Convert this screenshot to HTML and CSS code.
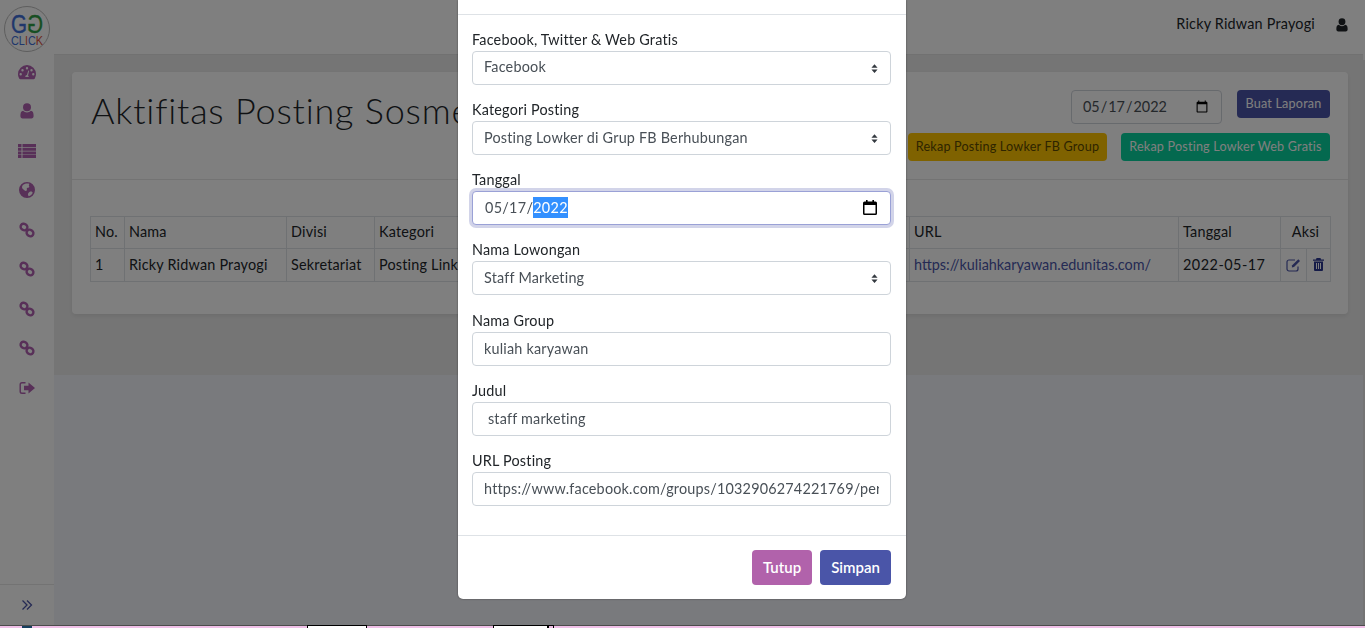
FILE: index.html
```html
<!DOCTYPE html>
<html lang="en">
<head>
    <meta charset="UTF-8">
    <meta name="viewport" content="width=device-width, initial-scale=1.0">
    <title>Aktifitas Posting Sosmed</title>
    <link rel="stylesheet" href="styles.css">
</head>
<body>
    <div class="app">
        <aside class="sidebar">
            <a class="logo" href="#">
                <svg width="48" height="48" viewBox="0 0 48 48">
                    <circle cx="24" cy="24" r="22.5" fill="#fff" stroke="#bbb"/>
                    <text x="8" y="28" class="logo-g" fill="#3f6fd8" stroke="#3f6fd8" stroke-width="0.4" textLength="16" lengthAdjust="spacingAndGlyphs">G</text>
                    <text x="-40" y="28" class="logo-g" fill="#2f9e44" stroke="#2f9e44" stroke-width="0.4" transform="scale(-1 1)" textLength="16" lengthAdjust="spacingAndGlyphs">G</text>
                    <text x="8" y="39.500" class="logo-click" textLength="32" lengthAdjust="spacingAndGlyphs"><tspan fill="#3f6fd8">C</tspan><tspan fill="#3f6fd8">L</tspan><tspan fill="#e0603a">I</tspan><tspan fill="#3f6fd8">C</tspan><tspan fill="#d8503a">K</tspan></text>
                </svg>
            </a>
            <nav class="side-nav">
                <a href="#"><svg width="18" height="16" viewBox="0 0 18 16"><path fill-rule="evenodd" d="M9 1a9 9 0 0 0-9 9c0 1.700.5 3.300 1.300 4.700.3.300.600.500 1 .500h13.400c.4 0 .7-.2 1-.5A9 9 0 0 0 18 10a9 9 0 0 0-9-9zM9 3a1.200 1.200 0 1 1 0 2.400A1.200 1.200 0 0 1 9 3zM4.500 5a1.200 1.200 0 1 1 0 2.400 1.200 1.200 0 0 1 0-2.400zm9 0a1.200 1.200 0 1 1 0 2.400 1.200 1.200 0 0 1 0-2.400zM2.700 9a1.200 1.200 0 1 1 0 2.400 1.200 1.200 0 0 1 0-2.400zm12.600 0a1.200 1.200 0 1 1 0 2.400 1.200 1.200 0 0 1 0-2.400zM10.300 6.500l.9.300-1.200 4.600c.5.400.8 1 .7 1.600H7.300c-.1-1 .6-1.900 1.600-2z"/></svg></a>
                <a href="#"><svg width="14" height="16" viewBox="0 0 14 16"><circle cx="7" cy="4.200" r="4"/><path d="M3.200 7.800C1 8 .4 10 .4 13c0 1.500.8 2.500 2.200 2.500h8.800c1.400 0 2.200-1 2.200-2.500 0-3-.6-5-2.800-5.200C9.700 8.800 8.500 9.400 7 9.400s-2.700-.6-3.800-1.600z"/></svg></a>
                <a href="#"><svg width="18" height="14" viewBox="0 0 18 14"><path d="M0 0h3.500v3H0zM4.500 0H18v3H4.500zM0 3.700h3.500v3H0zM4.500 3.700H18v3H4.500zM0 7.400h3.500v3H0zM4.500 7.400H18v3H4.500zM0 11h3.500v3H0zM4.500 11H18v3H4.500z"/></svg></a>
                <a href="#"><svg width="16" height="16" viewBox="0 0 16 16"><path fill-rule="evenodd" d="M8 0a8 8 0 1 1 0 16A8 8 0 0 1 8 0zM3.500 3.500C2.600 5 3 6.800 4.500 7.500c1 .5 1.300 1.500 2.300 1.500.8 0 1.400-1 1-2-.3-.8.500-1.300 1.300-1.300 1 0 1.500-.8 1-1.700-.5-.8-.3-1.500.4-2C8.500 1 5.500 1.500 3.500 3.500zM12 9.500c-1.200 0-2 .7-2.700 1.700-.7 1-.2 2 .4 3 1.700-.4 3.300-1.700 4-3.400-.4-.8-.9-1.300-1.700-1.300z"/></svg></a>
                <a href="#" class="chain"><svg width="16" height="16" viewBox="0 0 16 16"><g fill="none" stroke-width="2.400"><rect x="1.500" y="2" width="7" height="6" rx="3" transform="rotate(35 5 5)"/><rect x="7.500" y="8" width="7" height="6" rx="3" transform="rotate(35 11 11)"/></g></svg></a>
                <a href="#" class="chain"><svg width="16" height="16" viewBox="0 0 16 16"><g fill="none" stroke-width="2.400"><rect x="1.500" y="2" width="7" height="6" rx="3" transform="rotate(35 5 5)"/><rect x="7.500" y="8" width="7" height="6" rx="3" transform="rotate(35 11 11)"/></g></svg></a>
                <a href="#" class="chain"><svg width="16" height="16" viewBox="0 0 16 16"><g fill="none" stroke-width="2.400"><rect x="1.500" y="2" width="7" height="6" rx="3" transform="rotate(35 5 5)"/><rect x="7.500" y="8" width="7" height="6" rx="3" transform="rotate(35 11 11)"/></g></svg></a>
                <a href="#" class="chain"><svg width="16" height="16" viewBox="0 0 16 16"><g fill="none" stroke-width="2.400"><rect x="1.500" y="2" width="7" height="6" rx="3" transform="rotate(35 5 5)"/><rect x="7.500" y="8" width="7" height="6" rx="3" transform="rotate(35 11 11)"/></g></svg></a>
                <a href="#"><svg width="16" height="14" viewBox="0 0 16 14"><path d="M6.500 13H3a2.500 2.500 0 0 1-2.500-2.500v-7A2.500 2.500 0 0 1 3 1h3.500v1.400H3A1.100 1.100 0 0 0 1.900 3.500v7A1.100 1.100 0 0 0 3 11.600h3.500z"/><path d="M9.500 1.500 16 7l-6.500 5.500V9.300H5V4.700h4.500z"/></svg></a>
            </nav>
            <div class="side-footer">
                <svg width="12" height="12" viewBox="0 0 12 12" fill="none" stroke="#4a55a8" stroke-width="1.300"><path d="M1.500 1.500 6 6l-4.500 4.500M6 1.500 10.500 6 6 10.500"/></svg>
            </div>
        </aside>

        <div class="main">
            <header class="topbar">
                <span class="user-name">Ricky Ridwan Prayogi</span>
                <svg width="12" height="14" viewBox="0 0 14 16" fill="#212529"><circle cx="7" cy="4.200" r="4"/><path d="M3.200 7.800C1 8 .4 10 .4 13c0 1.500.8 2.500 2.200 2.500h8.800c1.400 0 2.200-1 2.200-2.500 0-3-.6-5-2.800-5.200C9.700 8.800 8.500 9.400 7 9.400s-2.700-.6-3.800-1.600z"/></svg>
            </header>
            <section class="content">
                <div class="card">
                    <div class="card-header">
                        <h1>Aktifitas Posting Sosmed</h1>
                        <div class="card-tools">
                            <div class="tools-row">
                                <input class="report-date" type="date" value="2022-05-17">
                                <button class="btn btn-sm btn-primary">Buat Laporan</button>
                            </div>
                            <div class="tools-row tools-row-second">
                                <button class="btn btn-sm btn-warning">Rekap Posting Lowker FB Group</button>
                                <button class="btn btn-sm btn-success">Rekap Posting Lowker Web Gratis</button>
                            </div>
                        </div>
                    </div>
                    <div class="card-body">
                        <table class="data-table">
                            <colgroup>
                                <col class="col-no">
                                <col class="col-name">
                                <col class="col-div">
                                <col class="col-cat">
                                <col class="col-url">
                                <col class="col-date">
                                <col class="col-edit">
                                <col class="col-del">
                            </colgroup>
                            <thead>
                                <tr>
                                    <th>No.</th>
                                    <th>Nama</th>
                                    <th>Divisi</th>
                                    <th>Kategori</th>
                                    <th>URL</th>
                                    <th>Tanggal</th>
                                    <th colspan="2" class="center">Aksi</th>
                                </tr>
                            </thead>
                            <tbody>
                                <tr>
                                    <td>1</td>
                                    <td>Ricky Ridwan Prayogi</td>
                                    <td>Sekretariat</td>
                                    <td>Posting Link</td>
                                    <td><a class="row-link" href="#">https://kuliahkaryawan.edunitas.com/</a></td>
                                    <td class="row-date">2022-05-17</td>
                                    <td class="center">
                                        <svg width="15" height="14" viewBox="0 0 15 14"><path fill="none" stroke="#4a55a8" stroke-width="1.200" d="M12 8.500V11a2 2 0 0 1-2 2H3a2 2 0 0 1-2-2V4a2 2 0 0 1 2-2h6"/><path fill="#4a55a8" d="M12.300 1.200 14 2.900 8 9 5.800 9.400 6.200 7.200z"/></svg>
                                    </td>
                                    <td class="center">
                                        <svg width="11" height="13" viewBox="0 0 11 13" fill="#2b3690"><path fill-rule="evenodd" d="M3.500 0h4L8 1.500h3v1.300H0V1.500h3zM1 3.500h9V12a1 1 0 0 1-1 1H2a1 1 0 0 1-1-1zM3 5v6h1V5zm2 0v6h1V5zm2 0v6h1V5z"/></svg>
                                    </td>
                                </tr>
                            </tbody>
                        </table>
                    </div>
                </div>
            </section>
            <div class="content-lower"></div>
        </div>
        <div class="page-scroll"></div>
    </div>

    <div class="browser-strip">
        <span class="strip-spot"></span>
        <span class="strip-tab strip-tab-a"></span>
        <span class="strip-tab strip-tab-b"></span>
        <span class="strip-tab strip-tab-c"></span>
    </div>

    <div class="backdrop"></div>

    <div class="modal">
        <div class="modal-header"></div>
        <form class="modal-body">
            <div class="form-group">
                <label>Facebook, Twitter &amp; Web Gratis</label>
                <select class="form-control"><option>Facebook</option></select>
            </div>
            <div class="form-group">
                <label>Kategori Posting</label>
                <select class="form-control"><option>Posting Lowker di Grup FB Berhubungan</option></select>
            </div>
            <div class="form-group">
                <label>Tanggal</label>
                <div class="form-control date-focus">
                    <span>05/17/<span class="selected">2022</span></span>
                    <svg width="14" height="15" viewBox="0 0 14 15"><path fill-rule="evenodd" d="M3 0h1.600v1.500h4.800V0H11v1.500h1.500A1.500 1.500 0 0 1 14 3v10.500a1.500 1.500 0 0 1-1.500 1.500h-11A1.500 1.500 0 0 1 0 13.500V3a1.500 1.500 0 0 1 1.500-1.500H3zM1.500 5v8.500h11V5z"/></svg>
                </div>
            </div>
            <div class="form-group">
                <label>Nama Lowongan</label>
                <select class="form-control"><option>Staff Marketing</option></select>
            </div>
            <div class="form-group">
                <label>Nama Group</label>
                <input class="form-control" type="text" value="kuliah karyawan">
            </div>
            <div class="form-group">
                <label>Judul</label>
                <input class="form-control" type="text" value=" staff marketing">
            </div>
            <div class="form-group">
                <label>URL Posting</label>
                <input class="form-control" type="text" value="https://www.facebook.com/groups/1032906274221769/permalink/1">
            </div>
        </form>
        <div class="modal-footer">
            <button class="btn btn-secondary">Tutup</button>
            <button class="btn btn-primary">Simpan</button>
        </div>
    </div>
</body>
</html>
```

FILE: styles.css
```css
* {
    box-sizing: border-box;
}
html, body {
    margin: 0;
    height: 100%;
    overflow: hidden;
}
body {
    font-family: "Lato", "Open Sans", sans-serif;
    font-size: 14.4px;
    line-height: 1.4;
    color: #212529;
    letter-spacing: 0.2px;
}
a {
    color: #4a55a8;
    text-decoration: none;
}

/* page under the modal */
.app {
    display: flex;
    height: 625px;
}
.sidebar {
    width: 54px;
    flex-shrink: 0;
    display: flex;
    flex-direction: column;
    background: #fff;
}
.logo {
    display: block;
    padding: 5px 0 0 3px;
    height: 52px;
}
.logo svg {
    display: block;
}
.logo-g {
    font-family: "Liberation Sans", sans-serif;
    font-size: 25px;
    letter-spacing: 0;
}
.logo-click {
    font-family: "Liberation Sans", sans-serif;
    font-size: 13px;
    letter-spacing: 0;
}
.side-nav {
    flex: 1;
    display: flex;
    flex-direction: column;
    align-items: center;
    fill: #b060b0;
    stroke: #b060b0;
}
.side-nav a {
    height: 39.500px;
    display: flex;
    align-items: center;
    justify-content: center;
}
.side-nav svg {
    stroke: none;
}
.side-nav .chain svg {
    stroke: #b060b0;
}
.side-footer {
    height: 41px;
    border-top: 1px solid #e6e6e6;
    display: flex;
    align-items: center;
    justify-content: center;
}
.main {
    flex: 1;
    display: flex;
    flex-direction: column;
    min-width: 0;
}
.topbar {
    height: 55px;
    flex-shrink: 0;
    background: #fff;
    border-bottom: 1px solid #e2e2e2;
    display: flex;
    align-items: center;
    justify-content: flex-end;
    gap: 21px;
    padding: 0 15px 5px 0;
}
.content {
    height: 320px;
    flex-shrink: 0;
    background: #ebebeb;
    padding: 17px 15px 0 18px;
}
.content-lower {
    flex: 1;
    background: #f3f4fa;
}
.page-scroll {
    width: 2px;
    flex-shrink: 0;
    background: linear-gradient(#fff 60px, #e8e8e8 60px);
}
.card {
    background: #fff;
    border-radius: 4px;
    box-shadow: 0 2px 4px rgba(0, 0, 0, 0.08);
    height: 242px;
}
.card-header {
    height: 108px;
    border-bottom: 1px solid #e6e6e6;
    display: flex;
    justify-content: space-between;
    padding: 18px 18px 0 19px;
}
h1 {
    margin: -1px 0 0;
    font-size: 36px;
    font-weight: 300;
    line-height: 43px;
    letter-spacing: 0.8px;
    white-space: nowrap;
}
.card-tools {
    display: flex;
    flex-direction: column;
    align-items: flex-end;
}
.tools-row {
    display: flex;
    align-items: flex-start;
    gap: 15px;
}
.tools-row-second {
    gap: 14px;
    margin-top: 9px;
}
.report-date {
    width: 151px;
    height: 34px;
    padding: 0 10px;
    border: 1px solid #ced4da;
    border-radius: 4px;
    background: #fff;
    color: #495057;
    font: inherit;
    letter-spacing: 0;
}
.btn {
    border: 0;
    border-radius: 4px;
    color: #fff;
    font-family: inherit;
    font-size: 15px;
    font-weight: 600;
    height: 35px;
    padding: 0 0 2px;
    cursor: pointer;
}
.btn-sm {
    font-size: 12.600px;
    font-weight: 400;
    height: 28px;
    padding: 0 0 1px;
    letter-spacing: 0.2px;
    white-space: nowrap;
}
.btn-primary {
    background: #4a55a8;
}
.btn-sm.btn-primary {
    width: 93px;
}
.btn-secondary {
    background: #b162ab;
}
.btn-warning {
    background: #ffc400;
    color: #5c4a00;
    width: 199px;
}
.btn-success {
    background: #08d29e;
    width: 209px;
}
.card-body {
    padding: 36px 18px 0;
}
.data-table {
    width: 100%;
    table-layout: fixed;
    border-collapse: collapse;
}
.data-table th, .data-table td {
    border: 1px solid #dee2e6;
    padding: 0 4px;
    font-weight: 400;
    text-align: left;
    white-space: nowrap;
    overflow: hidden;
}
.data-table th {
    height: 32px;
}
.data-table td {
    height: 33px;
}
.data-table .center {
    text-align: center;
    padding: 0;
}
.data-table svg {
    display: block;
    margin: -1px auto 0;
}
.row-link {
    letter-spacing: 0;
}
.row-date {
    letter-spacing: 0.5px;
}
.col-no { width: 34px; }
.col-name { width: 162px; }
.col-div { width: 88px; }
.col-cat { width: 535px; }
.col-url { width: 269px; }
.col-date { width: 102px; }
.col-edit { width: 26px; }
.col-del { width: 24px; }

.browser-strip {
    height: 3px;
    background: #f0c0e8;
    border-top: 1px solid #999;
    position: relative;
}
.strip-spot, .strip-tab {
    position: absolute;
    top: 0;
    height: 2px;
}
.strip-spot {
    left: 22px;
    width: 10px;
    background: #16405f;
}
.strip-tab {
    background: #fff;
    top: -1px;
    height: 3px;
    border: 1px solid #000;
    border-bottom: 0;
}
.strip-tab-a {
    left: 307px;
    width: 60px;
}
.strip-tab-b {
    left: 493px;
    width: 55px;
}
.strip-tab-c {
    left: 548px;
    width: 6px;
    background: #f0c0e8;
}

/* modal */
.backdrop {
    position: fixed;
    top: 0;
    left: 0;
    right: 0;
    height: 626px;
    background: rgba(0, 0, 0, 0.5);
}
.modal {
    position: fixed;
    top: 0;
    left: 458px;
    width: 448px;
    height: 599px;
    background: #fff;
    border-radius: 0 0 5px 5px;
    box-shadow: 0 0 2px rgba(0, 0, 0, 0.5);
    display: flex;
    flex-direction: column;
}
.modal-header {
    height: 15px;
    flex-shrink: 0;
    border-bottom: 1px solid #dee2e6;
}
.modal-body {
    flex: 1;
    padding: 16px 15px 0 14px;
}
.form-group {
    height: 70.170px;
}
label {
    display: block;
    height: 20px;
    line-height: 17px;
}
.form-control {
    display: block;
    width: 100%;
    height: 34px;
    padding: 0 11px 1px;
    border: 1px solid #ced4da;
    border-radius: 4px;
    background-color: #fff;
    color: #495057;
    font: inherit;
    letter-spacing: inherit;
    outline: none;
}
select.form-control {
    appearance: none;
    padding-right: 28px;
    background-image: url("data:image/svg+xml,%3Csvg xmlns='http://www.w3.org/2000/svg' width='7' height='9' viewBox='0 0 8 10'%3E%3Cpath fill='%23343a40' d='M4 0 7.500 4H.5zM4 10 .5 6h7z'/%3E%3C/svg%3E");
    background-repeat: no-repeat;
    background-position: right 12px center;
}
.date-focus {
    display: flex;
    align-items: center;
    justify-content: space-between;
    padding-left: 12px;
    padding-right: 13px;
    letter-spacing: 0.3px;
    border-color: #9aa1d6;
    box-shadow: 0 0 0 3px rgba(74, 85, 168, 0.25);
}
.selected {
    background: #3390ff;
    color: #fff;
    padding: 2px 0;
}
.modal-footer {
    height: 64px;
    flex-shrink: 0;
    border-top: 1px solid #dee2e6;
    display: flex;
    justify-content: flex-end;
    gap: 8px;
    padding: 14px 15px 0 0;
}
.modal-footer .btn-secondary {
    width: 60px;
}
.modal-footer .btn-primary {
    width: 71px;
}
```
